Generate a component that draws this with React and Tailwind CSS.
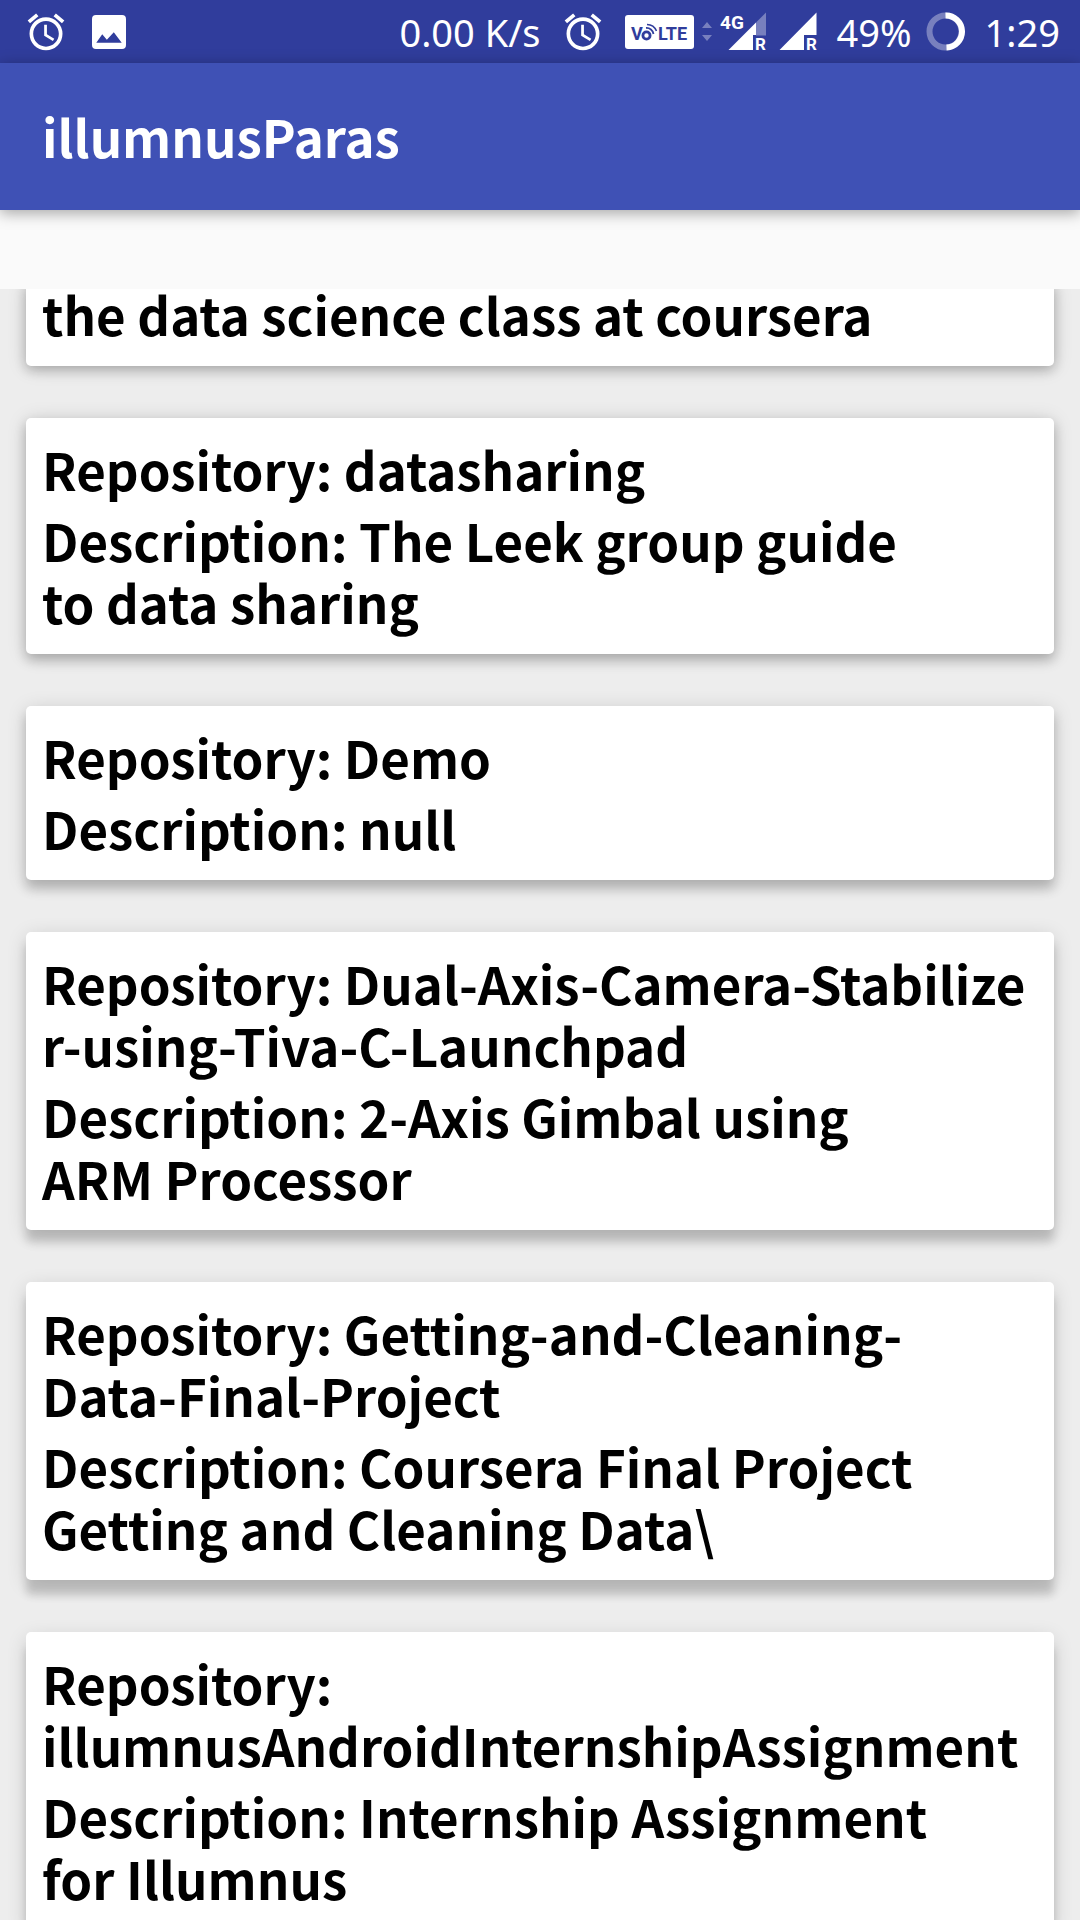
import { MdAlarm } from "react-icons/md";

const repositories = [
  {
    name: ["Repository: datasharing"],
    description: ["Description: The Leek group guide", "to data sharing"],
    shadow: "shadow-[0_2px_20px_rgba(0,0,0,0.14),0_6px_12px_rgba(0,0,0,0.22)]",
  },
  {
    name: ["Repository: Demo"],
    description: ["Description: null"],
    shadow: "shadow-[0_3px_20px_rgba(0,0,0,0.14),0_9px_11px_rgba(0,0,0,0.19)]",
  },
  {
    name: ["Repository: Dual-Axis-Camera-Stabilize", "r-using-Tiva-C-Launchpad"],
    description: ["Description: 2-Axis Gimbal using", "ARM Processor"],
    shadow: "shadow-[0_4px_20px_rgba(0,0,0,0.14),0_12px_10px_rgba(0,0,0,0.17)]",
  },
  {
    name: ["Repository: Getting-and-Cleaning-", "Data-Final-Project"],
    description: ["Description: Coursera Final Project", "Getting and Cleaning Data\\"],
    shadow: "shadow-[0_5px_20px_rgba(0,0,0,0.14),0_15px_9px_rgba(0,0,0,0.16)]",
  },
  {
    name: ["Repository:", "illumnusAndroidInternshipAssignment"],
    description: ["Description: Internship Assignment", "for Illumnus"],
    shadow: "shadow-[0_6px_20px_rgba(0,0,0,0.14),0_16px_9px_rgba(0,0,0,0.16)]",
  },
];

function Lines({ lines }) {
  return lines.map((line) => (
    <span key={line} className="block whitespace-nowrap">
      {line}
    </span>
  ));
}

function PictureIcon() {
  return (
    <svg className="size-[34px]" viewBox="0 0 103 103" aria-hidden="true">
      <path
        fill="#fff"
        fillRule="evenodd"
        d="M12 0H91Q103 0 103 12V91Q103 103 91 103H12Q0 103 0 91V12Q0 0 12 0ZM13 84H90L66 52L45 75L31 58Z"
      />
    </svg>
  );
}

function VolteIcon() {
  return (
    <svg className="h-[34px] w-[69px] overflow-visible" viewBox="0 0 69 34" aria-label="VoLTE">
      <rect width="69" height="34" rx="3" fill="#fff" />
      <g className="font-['Roboto',sans-serif] font-bold" fill="#303d9c" fontSize="18">
        <text x="6" y="25">V</text>
        <text x="33" y="25">LTE</text>
      </g>
      <g fill="none" stroke="#303d9c">
        <circle cx="21.5" cy="20.5" r="3.6" strokeWidth="2.8" />
        <path d="M21 13A7 7 0 0 1 28.5 19" strokeWidth="1.8" />
        <path d="M22 9.5A10.5 10.5 0 0 1 31.5 16" strokeWidth="1.6" />
      </g>
    </svg>
  );
}

function DataArrows() {
  return (
    <svg className="h-5 w-[10px]" viewBox="0 0 10 20" fill="#fff" fillOpacity="0.35" aria-hidden="true">
      <path d="M0 6L5 0L10 6ZM0 13H10L5 19Z" />
    </svg>
  );
}

function Signal4G() {
  return (
    <svg
      className="h-[39px] w-[47px] overflow-visible font-['Roboto',sans-serif] font-bold"
      viewBox="0 0 47 39"
      fill="#fff"
      aria-label="4G signal, roaming"
    >
      <path d="M36 10.5L46 0.5V23.5H36Z" fillOpacity="0.35" />
      <path d="M36 10.5V23H33V38H8.5Z" />
      <text x="0" y="17" fontSize="19">4G</text>
      <text x="35" y="37.5" fontSize="17">R</text>
    </svg>
  );
}

function Signal() {
  return (
    <svg
      className="h-[39px] w-[38px] overflow-visible font-['Roboto',sans-serif] font-bold"
      viewBox="0 0 38 39"
      fill="#fff"
      aria-label="Signal, roaming"
    >
      <path d="M37.5 0.5V23H25V38H0.5Z" />
      <text x="27" y="37.5" fontSize="17">R</text>
    </svg>
  );
}

function BatteryRing() {
  return (
    <svg className="size-[39px]" viewBox="0 0 39 39" fill="none" stroke="#fff" strokeWidth="6" aria-hidden="true">
      <circle cx="19.5" cy="19.5" r="16" strokeOpacity="0.35" />
      <path d="M19.5 3.5A16 16 0 0 1 20.5 35.5" />
    </svg>
  );
}

export default function App() {
  return (
    <div className="flex h-screen flex-col overflow-hidden bg-[#fafafa] font-['Noto_Sans_CJK_SC',sans-serif] text-black">
      <div className="flex h-[63px] shrink-0 items-center justify-between bg-[#303d9c] pr-5 pl-6 font-['Noto_Sans',sans-serif] text-[38px] leading-[52px] text-white">
        <div className="flex items-center gap-6">
          <MdAlarm className="size-[44px]" />
          <PictureIcon />
        </div>
        <div className="flex items-center">
          <span className="mr-5">0.00 K/s</span>
          <MdAlarm className="mr-5 size-[44px]" />
          <VolteIcon />
          <span className="mx-2">
            <DataArrows />
          </span>
          <span className="mr-3">
            <Signal4G />
          </span>
          <Signal />
          <span className="mr-3.5 ml-5">49%</span>
          <BatteryRing />
          <span className="ml-5">1:29</span>
        </div>
      </div>

      <header className="z-10 flex h-[147px] shrink-0 items-center bg-[#3f51b5] px-[42px] pb-0.5 shadow-[0_3px_14px_rgba(0,0,0,0.35)]">
        <h1 className="text-[51px] leading-[62px] font-bold text-white">illumnusParas</h1>
      </header>

      <main className="mt-[79px] flex flex-1 flex-col gap-[52px] overflow-hidden bg-[#ededed] px-[26px] text-[51px] leading-[62px] font-bold">
        <article className="-mt-1.5 shrink-0 rounded-b-[5px] bg-white px-4 pb-[21px] shadow-[0_2px_20px_rgba(0,0,0,0.14),0_4px_12px_rgba(0,0,0,0.22)]">
          <p className="whitespace-nowrap">the data science class at coursera</p>
        </article>
        {repositories.map((repo) => (
          <article
            key={repo.name.join("")}
            className={`flex shrink-0 flex-col gap-[9px] rounded-[5px] bg-white px-4 pt-5 pb-[21px] ${repo.shadow}`}
          >
            <h2>
              <Lines lines={repo.name} />
            </h2>
            <p>
              <Lines lines={repo.description} />
            </p>
          </article>
        ))}
      </main>
    </div>
  );
}
